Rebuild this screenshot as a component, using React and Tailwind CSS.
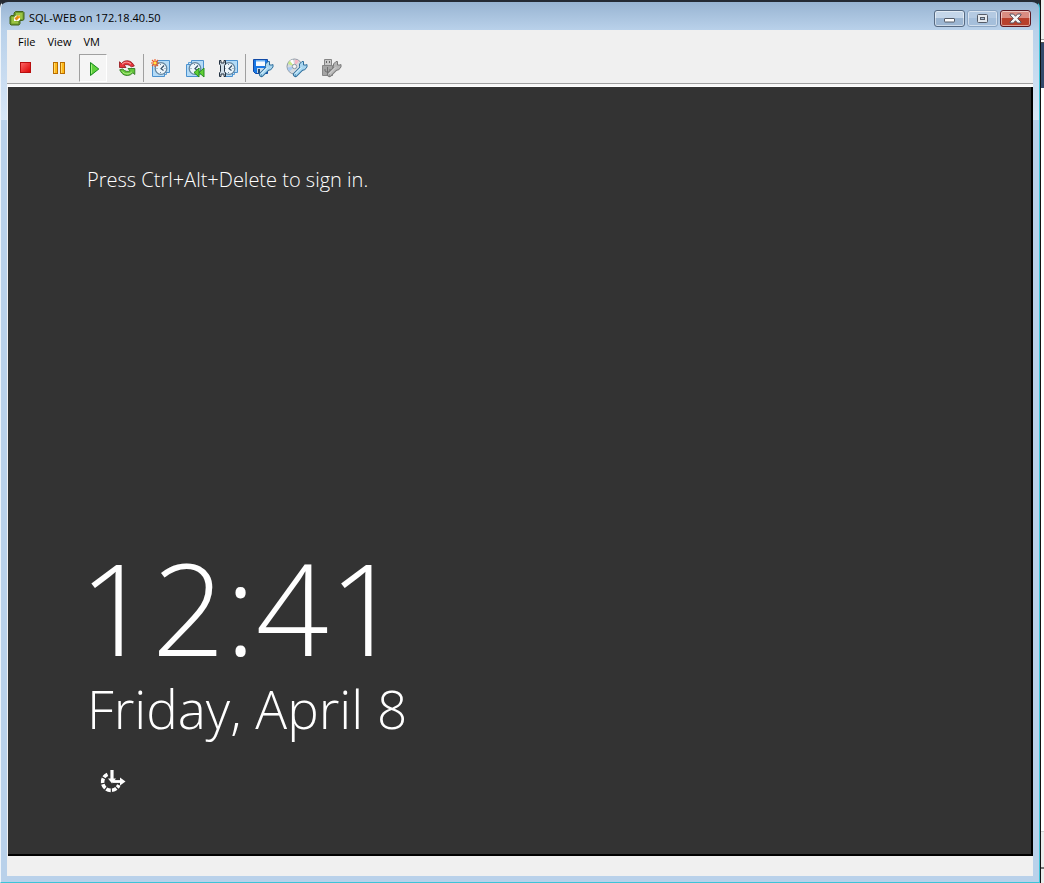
import React from "react";

function LogoIcon() {
  return (
    <svg width="16" height="16" viewBox="0 0 16 16" aria-hidden="true">
      <path d="M6.500 1.500h7.500l1 1v7l-1.500 1h-2.500v3l-1 1.500H2l-1-1V7l1-1.500h3V3z" fill="#6c9a2d" stroke="#44641c" />
      <path d="M7 3h6.500v6H11V7L9.500 5H7zM2.500 7H5v3l1.500 1.500H9V13.500H2.500z" fill="#9cc544" />
      <path d="M7 5.500h4v4L9.500 11H5V7.500z" fill="#fff" />
      <path d="M6.500 9.500 9.500 6.500" stroke="#e58a13" strokeWidth="3" />
      <path d="M8 5.500h3v3z" fill="#f3ad1e" />
    </svg>
  );
}

function StopIcon() {
  return (
    <svg width="14" height="12" viewBox="-2 0 14 12" aria-hidden="true">
      <defs>
        <linearGradient id="stop" x2="1" y2="1">
          <stop stopColor="#ff6a6a" />
          <stop offset="1" stopColor="#d90000" />
        </linearGradient>
      </defs>
      <rect x=".5" y=".5" width="10" height="10" fill="url(#stop)" stroke="#b80f0f" />
    </svg>
  );
}

function PauseIcon() {
  return (
    <svg width="12" height="12" viewBox="0 0 12 12" aria-hidden="true">
      <g fill="#ffb91c" stroke="#b86d00">
        <rect x=".5" y=".5" width="4" height="11" />
        <rect x="7.5" y=".5" width="4" height="11" />
      </g>
      <path d="M1.500 1v10M8.500 1v10" stroke="#ffdb6b" />
    </svg>
  );
}

function PlayIcon() {
  return (
    <svg width="14" height="18" viewBox="-3 -3 14 18" aria-hidden="true">
      <path d="M1.500.5v13L9.800 7z" fill="#5fd13c" stroke="#17891b" />
      <path d="M2.500 2.500v9" stroke="#a6ee7c" />
    </svg>
  );
}

function ResetIcon() {
  return (
    <svg width="18" height="18" viewBox="0 0 18 18" aria-hidden="true">
      <path d="M1.500 8.500V2.800l2 1.700C6 1.200 11 .7 14.300 4l2 3-3 .8C11 5.500 8.500 5 6.300 6.200L8 8.500z" fill="#e6343a" stroke="#8f1118" strokeWidth=".8" />
      <path d="M4 5.300C6.500 2.600 10.500 2.500 13 5.200" fill="none" stroke="#ffaaaa" />
      <path d="M16.800 9.500v6l-2-1.700C12 17.300 6.800 17.500 3.700 14l-2-3.200 3-.8c2.500 2.500 5 3 7.200 1.800L10 9.500z" fill="#63c63a" stroke="#236c17" strokeWidth=".8" />
      <path d="M4 12.300c2.500 3.100 7 3.400 9.800.7" fill="none" stroke="#b8f08a" />
    </svg>
  );
}

function ClockCard() {
  return (
    <g>
      <path d="M3.500 3.500h12v12h-12z" fill="#cfe8fa" stroke="#5c9fd6" />
      <path d="M6.500 1.500h12v12h-12zM1.500 5.500h12v12h-12z" fill="#b4dbf7" stroke="#4b91ce" />
      <circle cx="10" cy="9.500" r="5.800" fill="#edf5fa" stroke="#66869f" strokeWidth="1.300" />
      <path d="m13 6.500-3 3.200 2.500 1.800" fill="none" stroke="#354e67" strokeWidth="1.200" />
      <path d="M9.500 5v1M9.500 13v1M5.500 9.500h1M13.500 9.500h1" stroke="#6c879f" />
    </g>
  );
}

function TakeSnapshotIcon() {
  return (
    <svg width="20" height="19" viewBox="0 0 20 19" aria-hidden="true">
      <ClockCard />
      <path d="M4 0v8M0 4h8M1 1l6 6M7 1 1 7" stroke="#ee5823" strokeWidth="1.100" />
      <circle cx="4" cy="4" r="1.500" fill="#ffe84a" />
    </svg>
  );
}

function RevertIcon() {
  return (
    <svg width="20" height="19" viewBox="0 0 20 19" aria-hidden="true">
      <ClockCard />
      <path d="M14 9v9l-5-4.500zM19 9v9l-5-4.500z" fill="#61cf35" stroke="#238b1c" />
    </svg>
  );
}

function ManageSnapshotsIcon() {
  return (
    <svg width="20" height="19" viewBox="0 0 20 19" aria-hidden="true">
      <ClockCard />
      <path d="M0 0h6v19H0z" fill="#f0f0f0" />
      <path
        d="M.5 1.500h1.500v2.500h3V1.500h1.500v3.500L5.500 6.500v6L6.500 14v3.500H5V15H2v2.500H.5V14l1-1.500v-6L.5 5z"
        fill="#d3e0ea"
        stroke="#22303f"
        strokeLinejoin="round"
      />
    </svg>
  );
}

function Wrench({ muted = false }) {
  const edge = muted ? "#7a7a7a" : "#2f6f9c";
  return (
    <g fill="none" strokeLinejoin="round">
      <path d="m9.500 16.500 6.500-6.500" stroke={edge} strokeWidth="5" strokeLinecap="round" />
      <path d="M13.500 8.500V6L16 3.500h1.500V7H20l1-.5v2.500L18.500 12H15z" fill={muted ? "#b4b4b4" : "#a9d5ee"} stroke={edge} />
      <path d="m9.500 16.500 6.500-6.500" stroke={muted ? "#bcbcbc" : "#a9d9f3"} strokeWidth="3" strokeLinecap="round" />
      <path d="m8.800 15.800 6.400-6.400" stroke={muted ? "#dadada" : "#effaff"} />
      <path d="M9 17h1" stroke={edge} />
    </g>
  );
}

function FloppyIcon() {
  return (
    <svg width="22" height="20" viewBox="0 0 22 20" aria-hidden="true">
      <path d="M1.500 1.500h14v14h-12l-2-2z" fill="#1878e5" stroke="#1049a5" />
      <path d="M4 2h9v6H4z" fill="#f5faff" />
      <path d="M4 2h9v1.500H4z" fill="#6ab1f3" />
      <path d="M5 10h7v5H5z" fill="#c8dbe9" />
      <path d="M6 11h2v4H6z" fill="#274c75" />
      <Wrench />
    </svg>
  );
}

function DiscIcon() {
  return (
    <svg width="22" height="20" viewBox="0 0 22 20" aria-hidden="true">
      <circle cx="8.500" cy="8.500" r="7.500" fill="#d5dbe0" stroke="#8b98a4" />
      <path d="M8.500 8.500 4 2.500A7 7 0 0 0 2 6z" fill="#c9e98b" />
      <path d="M8.500 8.500 9 1.500a7 7 0 0 1 4 1.600z" fill="#f5b8c5" />
      <path d="m8.500 8.500-7 1a7 7 0 0 0 2 4z" fill="#a8c9ef" />
      <path d="M8.500 8.500 4 2.700A7 7 0 0 1 7 1.500z" fill="#fff" />
      <circle cx="8.500" cy="8.500" r="2.200" fill="#f5f5f5" stroke="#8997a5" />
      <Wrench />
    </svg>
  );
}

function UsbIcon() {
  return (
    <svg width="22" height="20" viewBox="0 0 22 20" aria-hidden="true">
      <path d="M4.500 1.500h7v6h-7z" fill="#c9c9c9" stroke="#858585" />
      <path d="M6 3h1v2H6zM9 3h1v2H9z" fill="#666" />
      <path d="M2.500 7.500h10v10h-10z" fill="#a4a4a4" stroke="#858585" />
      <path d="M7.500 9v7M5 11v2l2.500 1.500L10 13v-2" fill="none" stroke="#707070" />
      <Wrench muted />
    </svg>
  );
}

function EaseOfAccessIcon() {
  return (
    <svg width="28" height="26" viewBox="0 0 28 26" fill="none" stroke="#fff" aria-hidden="true">
      <path d="M8.500 5.300A8.400 8.400 0 1 0 19.800 16" strokeWidth="3.600" strokeDasharray="4.700 1.200" />
      <path d="M13 1v11" strokeWidth="3.200" />
      <path d="M9 9.500h8l-4 5z" fill="#fff" stroke="none" />
      <path d="M14 12.500h8" strokeWidth="2.800" />
      <path d="m21 8.500 5.500 4-5.500 4z" fill="#fff" stroke="none" />
    </svg>
  );
}

function ToolButton({ label, pressed = false, disabled = false, children }) {
  return (
    <button
      type="button"
      aria-label={label}
      disabled={disabled}
      className={
        pressed
          ? "flex h-7 w-7 items-center justify-center border border-[#a0a0a0] border-r-white border-b-white bg-[#f5f5f5]"
          : "flex h-7 w-7 items-center justify-center"
      }
    >
      {children}
    </button>
  );
}

function Separator() {
  return (
    <div className="h-7 w-1.5 pl-0.5">
      <div className="h-full w-px bg-[#a0a0a0]" />
    </div>
  );
}

function TitleBar() {
  const caption =
    "flex h-[17px] items-center justify-center rounded-[3px] border shadow-[inset_0_0_0_1px_rgba(255,255,255,0.5)]";
  return (
    <header className="flex h-7 items-start justify-between pr-0.5 pl-0.5">
      <div className="flex items-center gap-1 pt-2">
        <LogoIcon />
        <h1 className="text-[11px] leading-4 text-black">SQL-WEB on 172.18.40.50</h1>
      </div>
      <div className="flex gap-0.5 pt-2">
        <button
          type="button"
          aria-label="Minimize"
          className={`${caption} w-[31px] border-[#566a82] bg-linear-to-b from-[#c4d6e9] from-50% to-[#9cb6d2] to-50%`}
        >
          <svg width="12" height="9" viewBox="0 0 12 9" aria-hidden="true">
            <rect x=".5" y="4.500" width="10" height="3.500" rx=".5" fill="#fff" stroke="#545c68" />
          </svg>
        </button>
        <button
          type="button"
          aria-label="Maximize"
          disabled
          className={`${caption} w-[31px] border-[#8ba5c2] bg-linear-to-b from-[#b4cae2] from-50% to-[#a5bfdb] to-50%`}
        >
          <svg width="11" height="9" viewBox="0 0 11 9" aria-hidden="true">
            <rect x=".5" y=".5" width="10" height="8" rx="1" fill="#e4e9ef" stroke="#545c68" />
            <rect x="3.500" y="3.500" width="4" height="2" fill="#a9bdd4" stroke="#545c68" />
          </svg>
        </button>
        <button
          type="button"
          aria-label="Close"
          className={`${caption} w-[31px] border-[#5d1720] bg-linear-to-b from-[#d98c81] from-50% to-[#b8402c] to-50%`}
        >
          <svg width="13" height="11" viewBox="0 0 13 11" aria-hidden="true">
            <path d="M1 1h3.500l2 2.300L8.500 1H12v1L8.700 5.500 12 9v1H8.500l-2-2.300-2 2.300H1V9l3.300-3.500L1 2z" fill="#f5f5f5" stroke="#5b505e" />
          </svg>
        </button>
      </div>
    </header>
  );
}

function LockScreen() {
  return (
    <main className="ml-px flex flex-1 flex-col justify-between border-r-2 border-b-2 border-black bg-[#333333] pt-[77px] pr-8 pb-[59px] pl-[79px] text-white">
      <p className="text-[20px] leading-8 font-light">Press Ctrl+Alt+Delete to sign in.</p>
      <div>
        <time className="-ml-2 block text-[128px] leading-[132px] font-light">12:41</time>
        <p className="text-[53px] leading-[72px] font-light">Friday, April 8</p>
        <button type="button" aria-label="Ease of access" className="mt-6 ml-3 block">
          <EaseOfAccessIcon />
        </button>
      </div>
    </main>
  );
}

export default function App() {
  return (
    <div className="flex min-h-screen bg-[#262b33] font-['Open_Sans','Noto_Sans',sans-serif]">
      <div className="flex flex-1 flex-col rounded-t-lg border-t-2 border-r border-b border-l border-t-[#252b34] border-r-[#3cc4d8] border-b-[#3cc4d8] border-l-[#eef4fa] bg-[linear-gradient(#98b4d2_0px,#b9d1ea_28px,#d7e6f6_118px,#b9d1ea_118px)] px-1.5 pb-1.5">
        <TitleBar />
        <div className="flex flex-1 flex-col bg-[#f0f0f0]">
          <nav className="flex h-6 items-center gap-3 pl-[11px] text-[11px] leading-4 text-black">
            <button type="button">File</button>
            <button type="button">View</button>
            <button type="button">VM</button>
          </nav>
          <div className="flex h-[30px] border-b border-[#a0a0a0] pl-1">
            <div className="flex gap-1.5">
              <ToolButton label="Power off"><StopIcon /></ToolButton>
              <ToolButton label="Suspend"><PauseIcon /></ToolButton>
              <ToolButton label="Power on" pressed><PlayIcon /></ToolButton>
              <ToolButton label="Reset"><ResetIcon /></ToolButton>
            </div>
            <Separator />
            <div className="flex gap-1.5">
              <ToolButton label="Take snapshot"><TakeSnapshotIcon /></ToolButton>
              <ToolButton label="Revert to snapshot"><RevertIcon /></ToolButton>
              <ToolButton label="Manage snapshots"><ManageSnapshotsIcon /></ToolButton>
            </div>
            <Separator />
            <div className="flex gap-1.5">
              <ToolButton label="Floppy settings"><FloppyIcon /></ToolButton>
              <ToolButton label="Disc settings"><DiscIcon /></ToolButton>
              <ToolButton label="USB settings" disabled><UsbIcon /></ToolButton>
            </div>
          </div>
          <div className="h-[3px] border-b border-white bg-[#f8f8f8]" />
          <LockScreen />
          <footer className="h-5 bg-[#f0f0f0]" />
        </div>
      </div>
      <div className="flex w-1 flex-col border-l border-[#111] bg-white">
        <div className="h-10 border-b border-[#a0a0a0] bg-[#f0f0f0]" />
        <div className="mt-0.5 h-[46px] border-t border-[#555] bg-[#34496b]" />
        <div className="flex-1" />
        <div className="h-[52px] border-t border-[#d0d0d0] bg-[#ededed] pt-[35px]">
          <div className="h-0.5 bg-[#777]" />
        </div>
      </div>
    </div>
  );
}
